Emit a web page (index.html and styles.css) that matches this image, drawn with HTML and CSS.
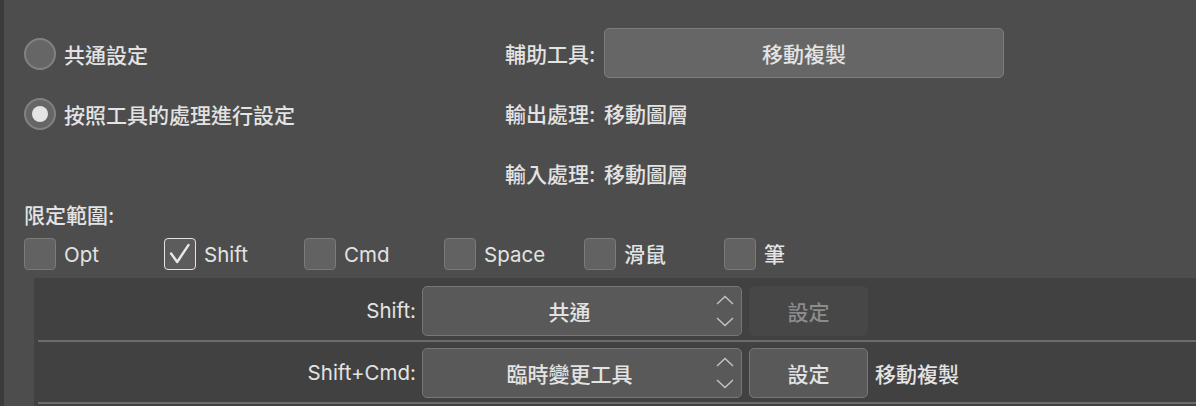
FILE: index.html
```html
<!DOCTYPE html>
<html lang="zh-Hant">
<head>
<meta charset="utf-8">
<title>設定</title>
<link rel="stylesheet" href="styles.css">
</head>
<body>
<div class="app">
  <div class="strip"></div>
  <div class="content">
    <div class="top">
      <div class="left-col">
        <div class="row"><span class="radio"></span><span class="txt">共通設定</span></div>
        <div class="row"><span class="radio on"></span><span class="txt">按照工具的處理進行設定</span></div>
      </div>
      <div class="right-col">
        <div class="row"><span class="key">輔助工具:</span><div class="wide-btn">移動複製</div></div>
        <div class="row"><span class="key">輸出處理:</span><span class="txt">移動圖層</span></div>
        <div class="row"><span class="key">輸入處理:</span><span class="txt">移動圖層</span></div>
      </div>
    </div>
    <div class="scope-label">限定範圍:</div>
    <div class="checks">
      <div class="check-item"><span class="box"></span><span class="lat">Opt</span></div>
      <div class="check-item"><span class="box checked"><svg viewBox="0 0 32 32" width="30" height="30"><polyline points="6.5,15.5 13,24.5 25,6.5" fill="none" stroke="#e8e8e8" stroke-width="2.6" stroke-linecap="round" stroke-linejoin="round"/></svg></span><span class="lat">Shift</span></div>
      <div class="check-item"><span class="box"></span><span class="lat">Cmd</span></div>
      <div class="check-item"><span class="box"></span><span class="lat">Space</span></div>
      <div class="check-item"><span class="box"></span><span class="txt">滑鼠</span></div>
      <div class="check-item"><span class="box"></span><span class="txt">筆</span></div>
    </div>
    <div class="panel">
      <div class="prow">
        <span class="plabel lat">Shift:</span>
        <div class="select">
          <span class="sel-text">共通</span>
          <svg class="chev" viewBox="0 0 18 32" width="18" height="32"><polyline points="1,9 9,1.5 17,9" fill="none" stroke="#c4c4c4" stroke-width="1.4"/><polyline points="1,23 9,30.5 17,23" fill="none" stroke="#c4c4c4" stroke-width="1.4"/></svg>
        </div>
        <div class="btn disabled">設定</div>
      </div>
      <div class="prow">
        <span class="plabel lat">Shift+Cmd:</span>
        <div class="select">
          <span class="sel-text">臨時變更工具</span>
          <svg class="chev" viewBox="0 0 18 32" width="18" height="32"><polyline points="1,9 9,1.5 17,9" fill="none" stroke="#c4c4c4" stroke-width="1.4"/><polyline points="1,23 9,30.5 17,23" fill="none" stroke="#c4c4c4" stroke-width="1.4"/></svg>
        </div>
        <div class="btn">設定</div>
        <span class="txt value">移動複製</span>
      </div>
    </div>
  </div>
</div>
</body>
</html>
```

FILE: styles.css
```css
* { box-sizing: border-box; }
html, body {
  margin: 0;
  padding: 0;
  background: #4d4d4d;
}
body {
  font-family: Inter, "Noto Sans CJK TC", sans-serif;
  font-size: 21px;
  font-weight: 500;
  color: #e3e3e3;
  line-height: 24px;
}
.lat {
  font-weight: 400;
  font-size: 20.5px;
}
.app {
  display: flex;
  width: 1196px;
  height: 406px;
  overflow: hidden;
}
.strip {
  width: 4px;
  flex: none;
  background: #3b3b3b;
}
.content {
  flex: 1;
  display: flex;
  flex-direction: column;
  padding-left: 20px;
  min-width: 0;
}
.top {
  display: flex;
  padding-top: 28px;
}
.left-col, .right-col {
  display: flex;
  flex-direction: column;
  gap: 10px;
}
.left-col { width: 481px; }
.row {
  height: 50px;
  display: flex;
  align-items: center;
}
.row .txt, .row .key { padding-top: 3px; }
.left-col .row { gap: 8px; padding-top: 2px; }
.radio {
  width: 32px;
  height: 32px;
  border-radius: 50%;
  background: #666666;
  border: 2px solid #828282;
  display: flex;
  align-items: center;
  justify-content: center;
  flex: none;
}
.radio.on::after {
  content: "";
  width: 16px;
  height: 16px;
  border-radius: 50%;
  background: #e4e4e4;
}
.key {
  width: 99px;
  flex: none;
}
.wide-btn {
  width: 400px;
  height: 50px;
  padding-top: 3px;
  background: #666666;
  border: 1px solid #7e7e7e;
  border-radius: 5px;
  display: flex;
  align-items: center;
  justify-content: center;
}
.scope-label {
  margin-top: 4px;
  height: 24px;
  padding-top: 2px;
}
.checks {
  display: flex;
  margin-top: 12px;
  height: 32px;
}
.check-item {
  width: 140px;
  display: flex;
  align-items: center;
  gap: 8px;
}
.check-item span:last-child { padding-top: 2px; }
.box {
  width: 32px;
  height: 32px;
  background: #626262;
  border: 1px solid #7a7a7a;
  border-radius: 4px;
  flex: none;
  display: flex;
  align-items: center;
  justify-content: center;
}
.box.checked {
  border: 1.5px solid #e4e4e4;
  background: #5c5c5c;
}
.panel {
  margin-top: 8px;
  margin-left: 10px;
  margin-right: -10px;
  flex: 1;
  background: #414141;
  padding-top: 2px;
  padding-left: 4px;
}
.prow {
  display: flex;
  align-items: center;
  padding: 6px 0 4px;
  border-bottom: 2px solid #6c6c6c;
}
.plabel {
  width: 378px;
  text-align: right;
  flex: none;
}
.select {
  margin-left: 6px;
  width: 320px;
  height: 50px;
  background: #595959;
  border: 1px solid #767676;
  border-radius: 5px;
  display: flex;
  align-items: center;
  flex: none;
}
.sel-text {
  flex: 1;
  text-align: center;
  padding-top: 3px;
}
.chev {
  margin-right: 7px;
  flex: none;
}
.btn {
  margin-left: 7px;
  width: 119px;
  height: 50px;
  padding-top: 3px;
  background: #595959;
  border: 1px solid #767676;
  border-radius: 5px;
  display: flex;
  align-items: center;
  justify-content: center;
  flex: none;
}
.btn.disabled {
  background: #474747;
  border-color: #474747;
  color: #8c8c8c;
}
.value {
  margin-left: 7px;
  padding-top: 3px;
}
```
